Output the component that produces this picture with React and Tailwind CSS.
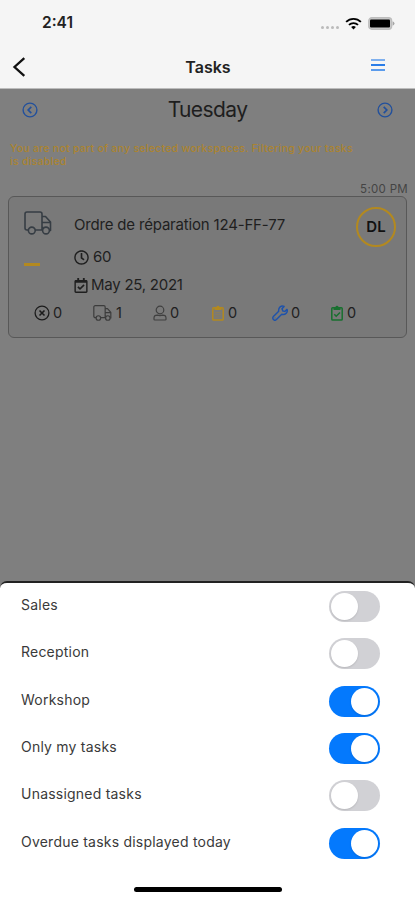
import React, { useState } from 'react'
import { FaRegClock, FaRegCalendarCheck } from 'react-icons/fa'

const INITIAL_FILTERS = [
  { id: 'sales', label: 'Sales', on: false },
  { id: 'reception', label: 'Reception', on: false },
  { id: 'workshop', label: 'Workshop', on: true },
  { id: 'mine', label: 'Only my tasks', on: true },
  { id: 'unassigned', label: 'Unassigned tasks', on: false },
  { id: 'overdue', label: 'Overdue tasks displayed today', on: true },
]

function Truck({ className, stroke }) {
  return (
    <svg viewBox="0 0 28 24" className={className} fill="none" stroke="currentColor" strokeWidth={stroke} strokeLinejoin="round">
      <path d="M4.300 19H3A2 2 0 0 1 1 17V3A2 2 0 0 1 3 1H16A2 2 0 0 1 18 3V19H11.200" />
      <path d="M18 5.500H21.500L26.500 11V19.500H25.500M18 11.500H26.500M18 16.500H19.500" />
      <circle cx="7.800" cy="19.500" r="3.400" />
      <circle cx="22" cy="19.500" r="3.400" />
    </svg>
  )
}

function CircleChevron({ flip }) {
  return (
    <svg viewBox="0 0 16 16" className={`w-4 h-4 text-[#22509c] ${flip ? 'rotate-180' : ''}`} fill="none" stroke="currentColor">
      <circle cx="8" cy="8" r="6.900" strokeWidth="1.400" />
      <path d="M9.300 4.900L6.200 8L9.300 11.100" strokeWidth="1.700" />
    </svg>
  )
}

function CircleX() {
  return (
    <svg viewBox="0 0 16 16" className="w-4 h-4 text-[#1c1c1c]" fill="none" stroke="currentColor">
      <circle cx="8" cy="8" r="6.900" strokeWidth="1.300" />
      <path d="M5.500 5.500L10.500 10.500M10.500 5.500L5.500 10.500" strokeWidth="1.600" />
    </svg>
  )
}

function Person() {
  return (
    <svg viewBox="0 0 14 16" className="w-3.5 h-4 text-[#404040]" fill="none" stroke="currentColor" strokeWidth="1.200">
      <circle cx="7" cy="5" r="3.800" />
      <path d="M4.300 10.200C2.300 10.200 1 11.400 1 13V14.200Q1 15 1.800 15H12.200Q13 15 13 14.200V13C13 11.400 11.700 10.200 9.700 10.200Q7 11 4.300 10.200Z" />
    </svg>
  )
}

function Clipboard({ className, check }) {
  return (
    <svg viewBox="0 0 12 16" className={className} fill="none" stroke="currentColor">
      <rect x="0.800" y="2.800" width="10.400" height="12.200" rx="0.800" strokeWidth="1.500" />
      <path d="M2.500 2H4.400A1.700 1.700 0 0 1 7.600 2H9.500V5H2.500Z" fill="currentColor" stroke="none" />
      {check
        ? <path d="M3.300 9.300L5.200 11.300L9 7.500" strokeWidth="1.500" />
        : <path d="M3 7.500H9M3 9.700H9M3 11.900H7.500" strokeWidth="0.600" opacity="0.500" />}
    </svg>
  )
}

function Wrench() {
  return (
    <svg viewBox="0 0 512 512" className="w-4 h-4 text-[#1d52ac]" fill="none" stroke="currentColor" strokeWidth="46" strokeLinejoin="round">
      <path d="M480 140L410 205L345 190L320 120L385 45C300 5 195 75 215 200L45 370A68 68 0 0 0 142 467L312 297C435 325 515 225 480 140Z" />
      <circle cx="96" cy="416" r="6" strokeWidth="18" />
    </svg>
  )
}

function Toggle({ on, onClick }) {
  return (
    <button
      role="switch" aria-checked={on} onClick={onClick}
      className={`w-[51px] h-[31px] rounded-full p-[2px] flex ${on ? 'bg-[#0479fd] justify-end' : 'bg-[#d1d1d5] justify-start'}`}
    >
      <span className="w-[27px] h-[27px] rounded-full bg-white shadow-[0_1px_2px_rgba(0,0,0,0.12)]" />
    </button>
  )
}

function StatusBar() {
  return (
    <div className="h-[46px] pl-[42px] pr-[20px] flex items-center justify-between">
      <span className="text-[15.5px] leading-5 font-semibold text-[#222]">2:41</span>
      <div className="flex items-center">
        <div className="flex gap-[2px] mt-[8px] mr-[6px]">
          {[0, 1, 2, 3].map(i => <span key={i} className="w-[3px] h-[3px] rounded-full bg-[#bbb]" />)}
        </div>
        <svg viewBox="0 0 18 13" className="w-[17px] h-[13px] mr-[6px] text-black" fill="none" stroke="currentColor" strokeWidth="2">
          <path d="M1.200 4.800A11 11 0 0 1 16.800 4.800" />
          <path d="M4.200 8A7 7 0 0 1 13.800 8" />
          <path d="M9 12.800L6.500 10.300A3.600 3.600 0 0 1 11.500 10.300Z" fill="currentColor" stroke="none" />
        </svg>
        <svg viewBox="0 0 27 13" className="w-[27px] h-[13px]">
          <rect x="0.800" y="0.800" width="22.800" height="11.400" rx="3" fill="#ccc" stroke="#bdbdbd" strokeWidth="1.400" />
          <rect x="2" y="2.400" width="20" height="8.200" rx="1" fill="#000" />
          <path d="M24.600 4.300Q26.500 5 26.500 6.500T24.600 8.700Z" fill="#a5a5a5" />
        </svg>
      </div>
    </div>
  )
}

export default function App() {
  const [filters, setFilters] = useState(INITIAL_FILTERS)

  const toggle = id => setFilters(fs => fs.map(f => f.id === id ? { ...f, on: !f.on } : f))

  return (
    <div className="w-[415px] h-[900px] bg-[#7f7f7f] flex flex-col overflow-hidden font-['Inter',sans-serif]">
      <header className="h-[89px] shrink-0 bg-[#f5f5f5] border-b border-[#bcbcbc]">
        <StatusBar />
        <div className="h-[42px] pl-[12px] pr-[30px] grid grid-cols-3 items-center">
          <svg viewBox="0 0 14 20" className="w-[14px] h-[20px] text-[#111]" fill="none" stroke="currentColor" strokeWidth="2.300">
            <path d="M12.300 1.200L2.500 10L12.300 18.800" />
          </svg>
          <h1 className="text-[16px] font-semibold text-[#222] text-center pl-[19px]">Tasks</h1>
          <div className="flex flex-col gap-[3px] justify-self-end mb-[4px]">
            <span className="w-[14px] h-[2px] bg-[#7fb0ee]" />
            <span className="w-[14px] h-[2px] bg-[#2a7de8]" />
            <span className="w-[14px] h-[2px] bg-[#5a9bec]" />
          </div>
        </div>
      </header>

      <main className="h-[492px] shrink-0">
        {/* Day switcher */}
        <div className="h-[42px] px-[22px] flex items-center justify-between">
          <CircleChevron />
          <h2 className="text-[21px] tracking-[-0.6px] text-[#1e1e1e]">Tuesday</h2>
          <CircleChevron flip />
        </div>

        <p className="mt-[11px] ml-[10px] h-[26px] text-[10.5px] leading-[13px] tracking-[0.27px] font-medium text-[#ab8430] whitespace-nowrap">
          You are not part of any selected workspaces. Filtering your tasks<br />is disabled
        </p>
        <div className="mt-[14px] h-[14px] pr-[7px] text-right text-[11.5px] leading-[15px] tracking-[0.3px] text-[#444]">5:00 PM</div>

        {/* Task card */}
        <div className="mx-[8px] h-[142px] rounded-[6px] border border-[#585858] bg-[#797979] text-[#1f1f1f]">
          <div className="flex h-[105px]">
            <div className="w-[65px] pl-[15px] pt-[14px]">
              <Truck className="w-[28px] h-[24px] text-[#363d44]" stroke={1.6} />
              <div className="mt-[28px] w-[16px] h-[3px] bg-[#b3891f]" />
            </div>
            <div className="flex-1 text-[15px] leading-[20px] whitespace-nowrap">
              <div className="mt-[18px] tracking-[-0.18px]">Ordre de réparation 124-FF-77</div>
              <div className="mt-[12px] flex items-center gap-[4px] tracking-[-0.3px]"><FaRegClock className="w-[15px] h-[15px]" />60</div>
              <div className="mt-[8px] flex items-center gap-[3px] tracking-[-0.25px]"><FaRegCalendarCheck className="w-[14px] h-[15px]" />May 25, 2021</div>
            </div>
            <div className="mt-[10px] mr-[10px] w-[40px] h-[40px] rounded-full border-2 border-[#b3891f] flex items-center justify-center text-[15px] font-semibold text-[#111]">DL</div>
          </div>
          <div className="pl-[25px] h-[22px] flex items-center text-[14.5px]">
            <div className="w-[59px] flex items-center gap-[3px]"><CircleX />0</div>
            <div className="w-[60px] flex items-center gap-[4px]"><Truck className="w-[19px] h-4 text-[#3c3c3c]" stroke={1.8} />1</div>
            <div className="w-[59px] flex items-center gap-[3px]"><Person />0</div>
            <div className="w-[60px] flex items-center gap-[4px]"><Clipboard className="w-3 h-4 text-[#b3891f]" />0</div>
            <div className="w-[59px] flex items-center gap-[3px]"><Wrench />0</div>
            <div className="flex items-center gap-[4px]"><Clipboard className="w-3 h-4 text-[#18702f]" check />0</div>
          </div>
        </div>
      </main>

      {/* Filter sheet */}
      <section className="flex-1 bg-white border-t-2 border-[#222] rounded-t-[7px] flex flex-col">
        {filters.map(f => (
          <div key={f.id} className="h-[47.3px] shrink-0 pl-[21px] pr-[35px] flex items-center justify-between">
            <span className="text-[14px] tracking-[0.22px] text-[#3a3a3a] pb-[4px]">{f.label}</span>
            <Toggle on={f.on} onClick={() => toggle(f.id)} />
          </div>
        ))}
        <div className="mt-[20px] w-[148px] h-[5px] rounded-full bg-black self-center" />
      </section>
    </div>
  )
}
